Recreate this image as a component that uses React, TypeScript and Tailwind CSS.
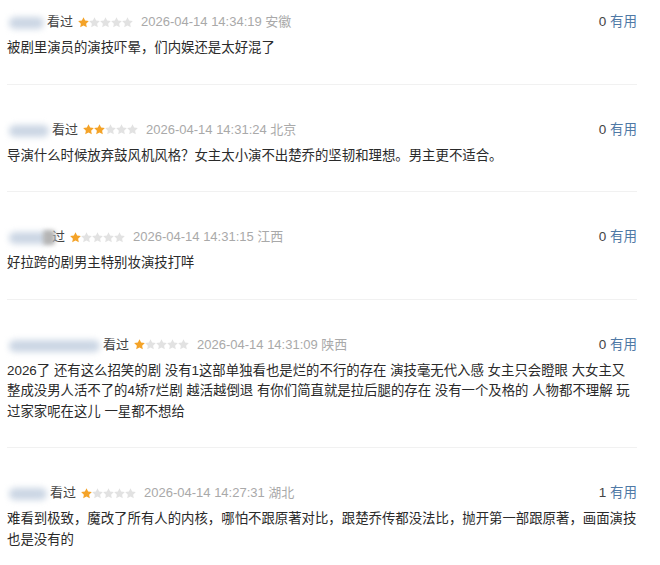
import React from 'react';

type Review = {
  nameW: number;
  gray?: boolean;
  stars: number;
  time: string;
  region: string;
  useful: number;
  lines: string[];
};

const reviews: Review[] = [
  {
    nameW: 37,
    stars: 1,
    time: '2026-04-14 14:34:19',
    region: '安徽',
    useful: 0,
    lines: ['被剧里演员的演技吓晕，们内娱还是太好混了'],
  },
  {
    nameW: 42,
    stars: 2,
    time: '2026-04-14 14:31:24',
    region: '北京',
    useful: 0,
    lines: ['导演什么时候放弃鼓风机风格？女主太小演不出楚乔的坚韧和理想。男主更不适合。'],
  },
  {
    nameW: 42,
    gray: true,
    stars: 1,
    time: '2026-04-14 14:31:15',
    region: '江西',
    useful: 0,
    lines: ['好拉跨的剧男主特别妆演技打咩'],
  },
  {
    nameW: 93,
    stars: 1,
    time: '2026-04-14 14:31:09',
    region: '陕西',
    useful: 0,
    lines: [
      '2026了 还有这么招笑的剧 没有1这部单独看也是烂的不行的存在 演技毫无代入感 女主只会瞪眼 大女主又',
      '整成没男人活不了的4矫7烂剧 越活越倒退 有你们简直就是拉后腿的存在 没有一个及格的 人物都不理解 玩',
      '过家家呢在这儿 一星都不想给',
    ],
  },
  {
    nameW: 40,
    stars: 1,
    time: '2026-04-14 14:27:31',
    region: '湖北',
    useful: 1,
    lines: [
      '难看到极致，魔改了所有人的内核，哪怕不跟原著对比，跟楚乔传都没法比，抛开第一部跟原著，画面演技',
      '也是没有的',
    ],
  },
];

// douban style rating star
function Star({ on }: { on: boolean }) {
  return (
    <svg width="11" height="11" viewBox="1.5 1.5 21 21" className="shrink-0">
      <path
        d="M12 1.8l3.1 6.6 7.1.9-5.2 4.9 1.3 7.1L12 17.8l-6.3 3.5 1.3-7.1L1.8 9.3l7.1-.9z"
        fill={on ? '#f4a328' : '#e2e2e2'}
      />
    </svg>
  );
}

function Row({ r, first }: { r: Review; first: boolean }) {
  return (
    <div className={`${first ? 'pt-[12px]' : 'pt-[35px]'} pb-[25px] border-b border-[#f1f1f1]`}>
      <div className="flex items-center h-[20px] leading-[20px]">
        <div className="relative h-[20px] shrink-0" style={{ width: r.nameW }}>
          <div className="absolute left-[2px] right-0 top-[5px] h-[12px] rounded-[6px] bg-[#cbd6e4] blur-[3px]" />
          {r.gray && (
            <div className="absolute right-[-6px] top-[3px] w-[12px] h-[15px] rounded-[3px] bg-[#b5b5b5] blur-[2px]" />
          )}
        </div>
        <span className="ml-[3px] text-[13px] text-[#444]">{r.gray ? '过' : '看过'}</span>
        <span className="ml-[5px] flex">
          {[0, 1, 2, 3, 4].map((i) => (
            <Star key={i} on={i < r.stars} />
          ))}
        </span>
        <span className="ml-[8px] text-[13px] text-[#a9a9a9]">
          {r.time} {r.region}
        </span>
        <span className="ml-auto text-[13.5px]">
          <span className="text-[#444]">{r.useful}</span>{' '}
          <span className="text-[#4f79a6]">有用</span>
        </span>
      </div>
      <div className="mt-[6px] text-[13.4px] leading-[20.5px] text-[#2a2a2a]">
        {r.lines.map((l, i) => (
          <div key={i} className="whitespace-nowrap">
            {l}
          </div>
        ))}
      </div>
    </div>
  );
}

export default function App() {
  return (
    <div
      className="w-[660px] h-[565px] overflow-hidden bg-white pl-[7px] pr-[23px]"
      style={{ fontFamily: '"Liberation Sans", "Noto Sans CJK SC", sans-serif' }}
    >
      {reviews.map((r, i) => (
        <Row key={i} r={r} first={i === 0} />
      ))}
    </div>
  );
}
